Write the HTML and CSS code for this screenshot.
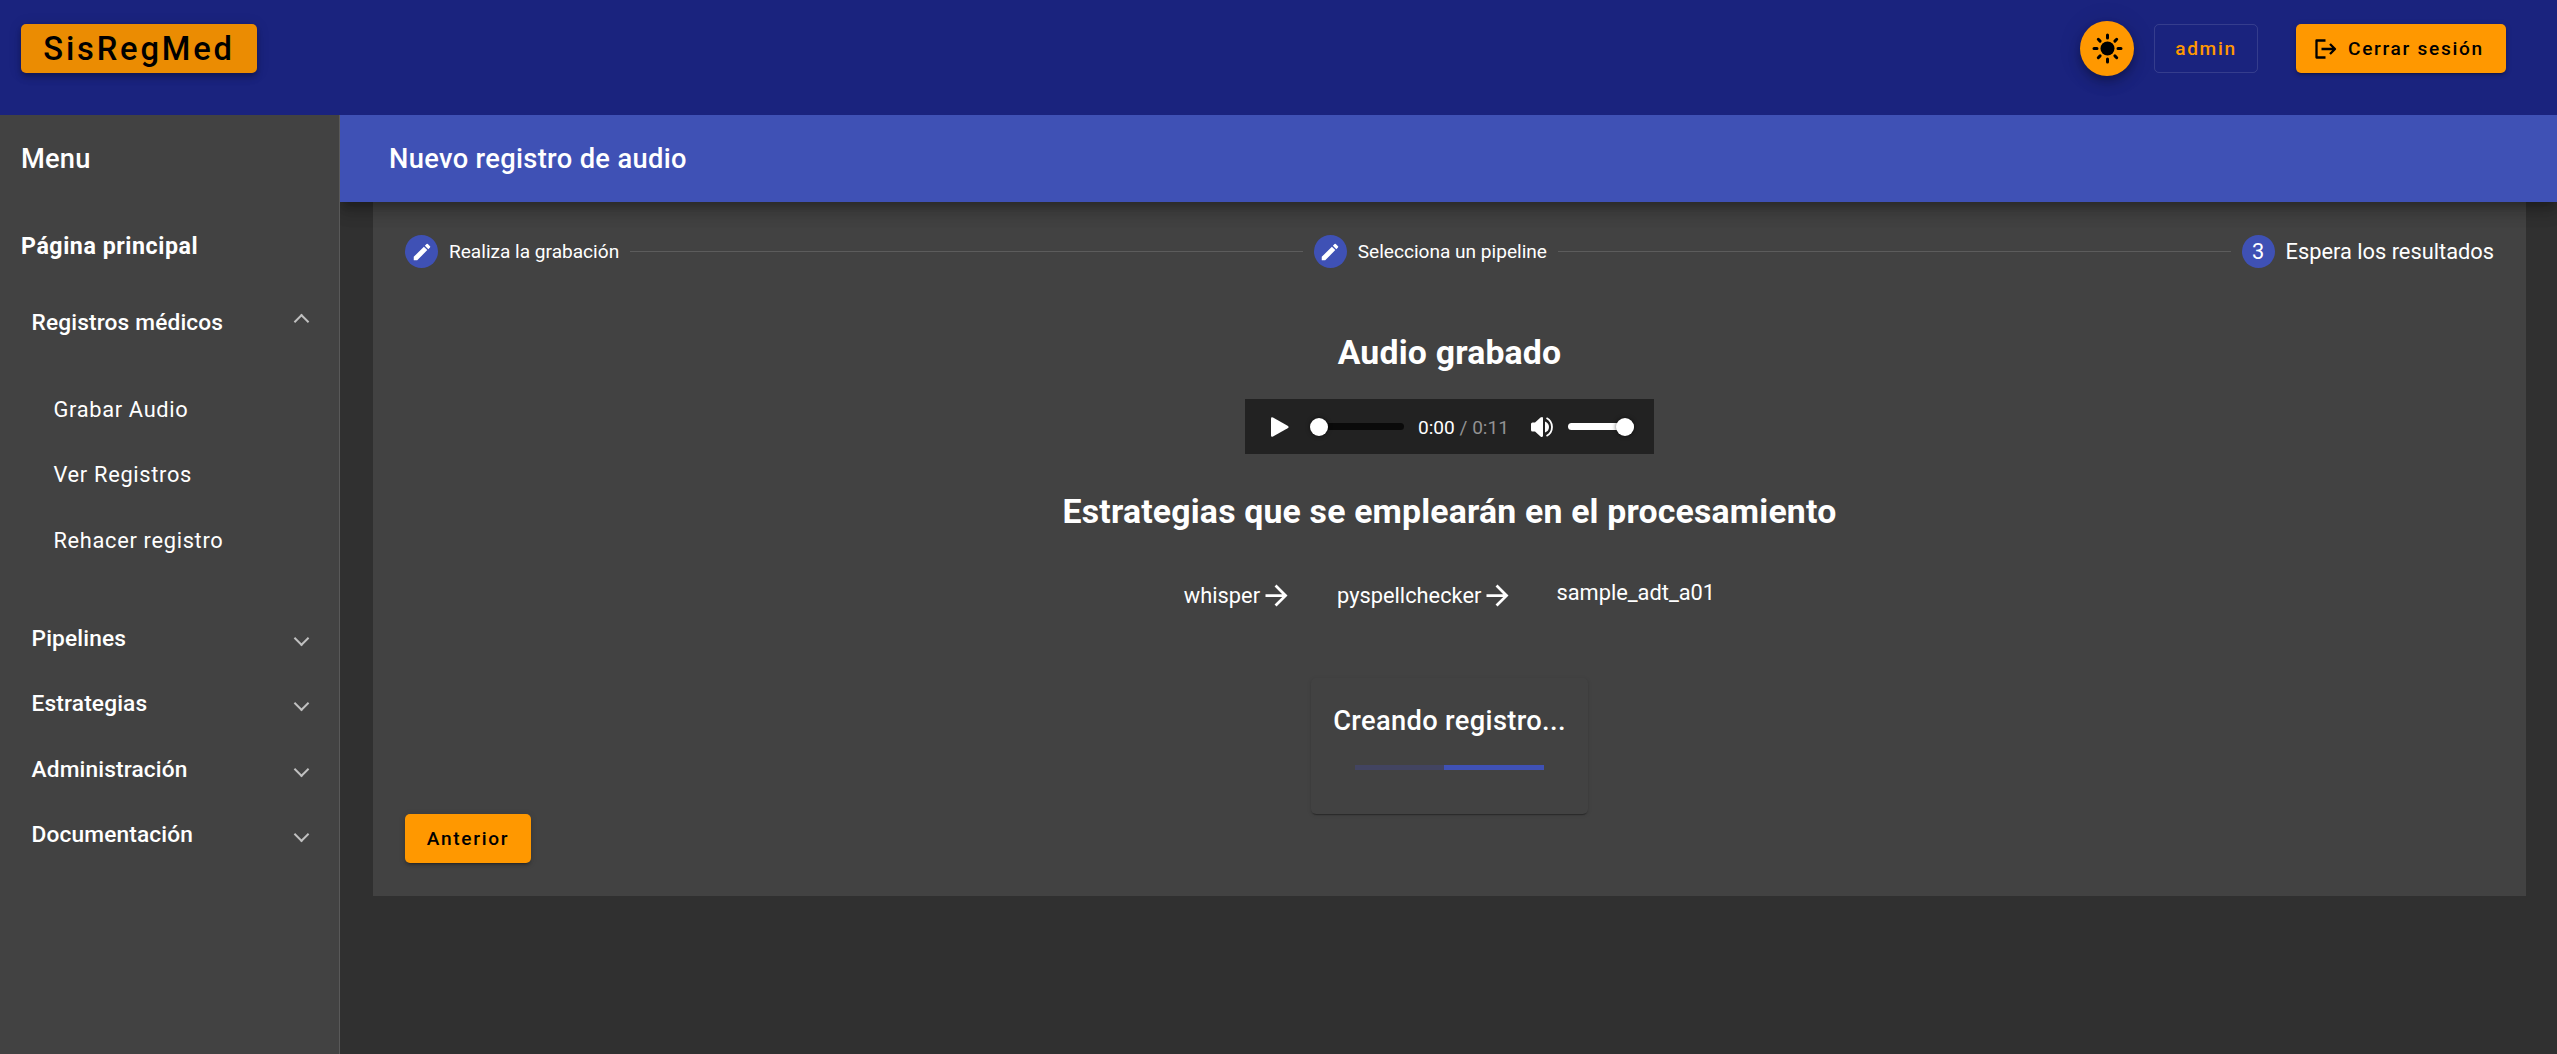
FILE: index.html
```html
<!DOCTYPE html>
<html lang="es">
<head>
<meta charset="utf-8">
<title>SisRegMed</title>
<link rel="stylesheet" href="styles.css">
</head>
<body>
<header class="topbar">
  <button class="btn brand">SisRegMed</button>
  <div class="actions">
    <button class="fab" aria-label="Tema">
      <svg viewBox="0 0 33 33"><circle cx="16.5" cy="16.5" r="7"/><path d="M16.5 3v3M16.5 27v3M3 16.5h3M27 16.5h3M7.3 7.3l1.8 1.8M23.9 23.9l1.8 1.8M7.3 25.7l1.8-1.8M23.9 9.1l1.8-1.8" stroke="#000" stroke-width="3" stroke-linecap="round"/></svg>
    </button>
    <button class="user">admin</button>
    <button class="btn logout">
      <svg viewBox="0 0 22 20"><path d="M10.500 1.500H1.500v17h9M6.500 10H20M15 5l5 5-5 5" fill="none" stroke="#000" stroke-width="2.3" stroke-linejoin="round"/></svg>
      <span>Cerrar sesión</span>
    </button>
  </div>
</header>
<div class="shell">
  <nav class="sidebar">
    <div class="menu-title">Menu</div>
    <a class="home">Página principal</a>
    <div class="group open"><span>Registros médicos</span><i class="chev up"></i></div>
    <div class="subs">
      <a>Grabar Audio</a>
      <a>Ver Registros</a>
      <a>Rehacer registro</a>
    </div>
    <div class="group"><span>Pipelines</span><i class="chev"></i></div>
    <div class="group"><span>Estrategias</span><i class="chev"></i></div>
    <div class="group"><span>Administración</span><i class="chev"></i></div>
    <div class="group"><span>Documentación</span><i class="chev"></i></div>
  </nav>
  <main class="content">
    <div class="toolbar">Nuevo registro de audio</div>
    <section class="panel">
      <div class="stepper">
        <div class="step"><b class="dot"><svg viewBox="0 0 24 24"><path d="M3 17.25V21h3.75L17.81 9.94l-3.75-3.75L3 17.25zM20.71 7.04a1 1 0 0 0 0-1.41l-2.34-2.34a1 1 0 0 0-1.41 0l-1.83 1.83 3.75 3.75 1.83-1.83z"/></svg></b><span>Realiza la grabación</span></div>
        <div class="line"></div>
        <div class="step"><b class="dot"><svg viewBox="0 0 24 24"><path d="M3 17.25V21h3.75L17.81 9.94l-3.75-3.75L3 17.25zM20.71 7.04a1 1 0 0 0 0-1.41l-2.34-2.34a1 1 0 0 0-1.41 0l-1.83 1.83 3.75 3.75 1.83-1.83z"/></svg></b><span>Selecciona un pipeline</span></div>
        <div class="line"></div>
        <div class="step current"><b class="dot">3</b><span>Espera los resultados</span></div>
      </div>
      <h1>Audio grabado</h1>
      <div class="player">
        <svg class="play" viewBox="0 0 18 20"><path d="M0 1.6Q0-.4 2 .4L16.6 8.700Q18.600 10 16.600 11.300L2 19.600Q0 20.400 0 18.400Z"/></svg>
        <div class="seek"><i class="thumb"></i></div>
        <div class="time">0:00 <span>/ 0:11</span></div>
        <svg class="vol" viewBox="0 0 22 20"><path d="M1.500 5.500H4L9.500.6Q12-.8 12 1.500v17Q12 20.800 9.500 19.400L4 14.500H1.500Q0 14.500 0 13V7Q0 5.500 1.500 5.500ZM14 4.500Q18 6 18 10T14 15.500Z"/><path d="M15.500 1Q21 4 21 10t-5.500 9" fill="none" stroke="#fff" stroke-width="1.800"/></svg>
        <div class="volume"><i class="thumb"></i></div>
      </div>
      <h1 class="second">Estrategias que se emplearán en el procesamiento</h1>
      <div class="chain">
        <div class="link"><span>whisper</span><svg viewBox="0 0 24 24"><path d="M12 4l-1.410 1.410L16.170 11H4v2h12.170l-5.580 5.590L12 20l8-8z"/></svg></div>
        <div class="link"><span>pyspellchecker</span><svg viewBox="0 0 24 24"><path d="M12 4l-1.410 1.410L16.170 11H4v2h12.170l-5.580 5.590L12 20l8-8z"/></svg></div>
        <div class="link last"><span>sample_adt_a01</span></div>
      </div>
      <div class="status">
        <div class="status-title">Creando registro...</div>
        <div class="progress"><i></i></div>
      </div>
      <button class="btn prev">Anterior</button>
    </section>
  </main>
</div>
</body>
</html>
```
FILE: styles.css
```css
* { box-sizing: border-box; }
body {
  margin: 0;
  height: 1054px;
  overflow: hidden;
  display: flex;
  flex-direction: column;
  background: #303030;
  color: #fff;
  font-family: Roboto, sans-serif;
  font-size: 21.82px;
}
button { font-family: inherit; border: 0; padding: 0; }
.topbar {
  position: relative;
  z-index: 2;
  flex: none;
  height: 115px;
  padding: 21px 51px 0 21px;
  display: flex;
  justify-content: space-between;
  align-items: flex-start;
  background: #1a237e;
}
.btn {
  height: 49px;
  border-radius: 5px;
  background: #ff9800;
  color: #000;
  font-size: 19.09px;
  font-weight: 500;
  letter-spacing: 1.7px;
  box-shadow: 0 4px 1px -3px rgba(0,0,0,.2), 0 3px 3px rgba(0,0,0,.14), 0 1px 7px rgba(0,0,0,.12);
}
.brand {
  width: 236px;
  margin-top: 3px;
  background: #eb8c02;
  font-size: 32.73px;
  font-weight: 500;
  letter-spacing: 2.8px;
  box-shadow: 0 3px 5px -1px rgba(0,0,0,.2), 0 5px 7px rgba(0,0,0,.14), 0 1px 14px rgba(0,0,0,.12);
}
.actions { display: flex; align-items: center; }
.fab {
  width: 54px;
  height: 55px;
  border-radius: 50%;
  background: #ff9800;
  display: flex;
  align-items: center;
  justify-content: center;
  box-shadow: 0 4px 7px -1px rgba(0,0,0,.2), 0 8px 14px rgba(0,0,0,.14), 0 1px 25px rgba(0,0,0,.12);
}
.fab svg { width: 33px; height: 33px; }
.user {
  width: 104px;
  height: 49px;
  margin: 0 38px 0 20px;
  border: 1px solid rgba(255,255,255,.12);
  border-radius: 5px;
  background: none;
  color: #ff9800;
  font-size: 19.09px;
  font-weight: 500;
  letter-spacing: 1.7px;
}
.logout {
  width: 210px;
  padding-left: 19px;
  display: flex;
  align-items: center;
}
.logout svg { width: 22px; height: 20px; margin-right: 11px; }
.shell { flex: 1; display: flex; min-height: 0; }
.sidebar {
  position: relative;
  z-index: 2;
  width: 340px;
  border-right: 1px solid #595959;
  background: #424242;
}
.menu-title {
  height: 87px;
  padding-left: 21px;
  line-height: 89px;
  font-size: 27.27px;
  font-weight: 500;
  letter-spacing: .2px;
}
.home {
  display: block;
  height: 65px;
  margin-top: 12px;
  padding-left: 21px;
  line-height: 64px;
  font-size: 23.2px;
  font-weight: 700;
  letter-spacing: .56px;
}
.group {
  height: 65.45px;
  padding: 0 33px 1px 31.5px;
  display: flex;
  align-items: center;
  justify-content: space-between;
  font-size: 22.7px;
  font-weight: 500;
  letter-spacing: .15px;
}
.group.open { height: 87px; }
.chev {
  width: 11px;
  height: 11px;
  margin-right: -.5px;
  border: solid #c0c0c0;
  border-width: 0 2px 2px 0;
  transform: rotate(45deg);
}
.chev.up { transform: translateY(-1px) rotate(225deg); }
.subs { padding: 11px 0 33px 53.5px; }
.subs a {
  display: block;
  height: 65.45px;
  line-height: 65.45px;
  letter-spacing: .68px;
}
.content { flex: 1; min-width: 0; }
.toolbar {
  position: relative;
  z-index: 1;
  height: 87px;
  padding-left: 49px;
  line-height: 89px;
  background: #3f51b5;
  font-size: 27.27px;
  font-weight: 500;
  letter-spacing: .34px;
  box-shadow: 0 7px 7px -4px rgba(0,0,0,.2), 0 11px 14px 1px rgba(0,0,0,.14), 0 4px 19px 3px rgba(0,0,0,.12);
}
.panel {
  height: 694px;
  margin: 0 31px 0 33px;
  padding: 33px 32px 0;
  display: flex;
  flex-direction: column;
  align-items: center;
  background: #424242;
}
.stepper {
  width: 100%;
  height: 33px;
  display: flex;
  align-items: center;
}
.step { display: flex; align-items: center; gap: 11px; font-size: 19.09px; }
.current { font-size: 21.82px; }
.dot {
  width: 33px;
  height: 33px;
  border-radius: 50%;
  display: flex;
  align-items: center;
  justify-content: center;
  background: #3f51b5;
  font-weight: 400;
}
.dot svg { width: 22px; height: 22px; fill: #fff; }
.line { flex: 1; height: 1px; margin: 0 11px; background: #5c5c5c; }
h1 {
  margin: 63px 0 0;
  font-size: 33.8px;
  line-height: 43px;
  font-weight: 700;
  letter-spacing: .18px;
}
h1.second { margin-top: 36px; }
.player {
  width: 409px;
  height: 55px;
  margin-top: 25px;
  padding-left: 26px;
  display: flex;
  align-items: center;
  background: #222;
}
.player svg { height: 20px; fill: #fff; }
.play { width: 18px; margin-right: 21px; }
.seek, .volume { height: 7px; border-radius: 4px; display: flex; align-items: center; }
.seek { width: 94px; background: #0a0a0a; margin-right: 14px; }
.volume { width: 66px; background: #fff; justify-content: flex-end; }
.thumb { flex: none; width: 18px; height: 18px; border-radius: 50%; background: #fff; box-shadow: 0 0 4px rgba(0,0,0,.6); }
.time { width: 113px; padding-top: 2px; font-size: 19.09px; white-space: nowrap; }
.time span { color: #929292; }
.vol { width: 22px; margin-right: 15px; }
.chain {
  margin-top: 46px;
  margin-bottom: 1px;
  display: flex;
  gap: 44px;
  height: 33px;
}
.link { display: flex; align-items: center; }
.link svg { width: 33px; height: 33px; fill: #fff; }
.last { margin-left: -2px; height: 27px; }
.status {
  width: 277px;
  height: 136px;
  margin-top: 65px;
  display: flex;
  flex-direction: column;
  align-items: center;
  border-radius: 5px;
  box-shadow: 0 3px 1px -2px rgba(0,0,0,.2), 0 1px 1px rgba(0,0,0,.14), 0 1px 4px rgba(0,0,0,.12);
}
.status-title { margin-top: 21px; line-height: 44px; font-size: 27.27px; font-weight: 500; letter-spacing: .34px; }
.progress { width: 189px; height: 5px; margin-top: 22px; display: flex; justify-content: flex-end; background: #424461; }
.progress i { width: 100px; background: #3f51b5; }
.prev { width: 126px; align-self: flex-start; }
```
